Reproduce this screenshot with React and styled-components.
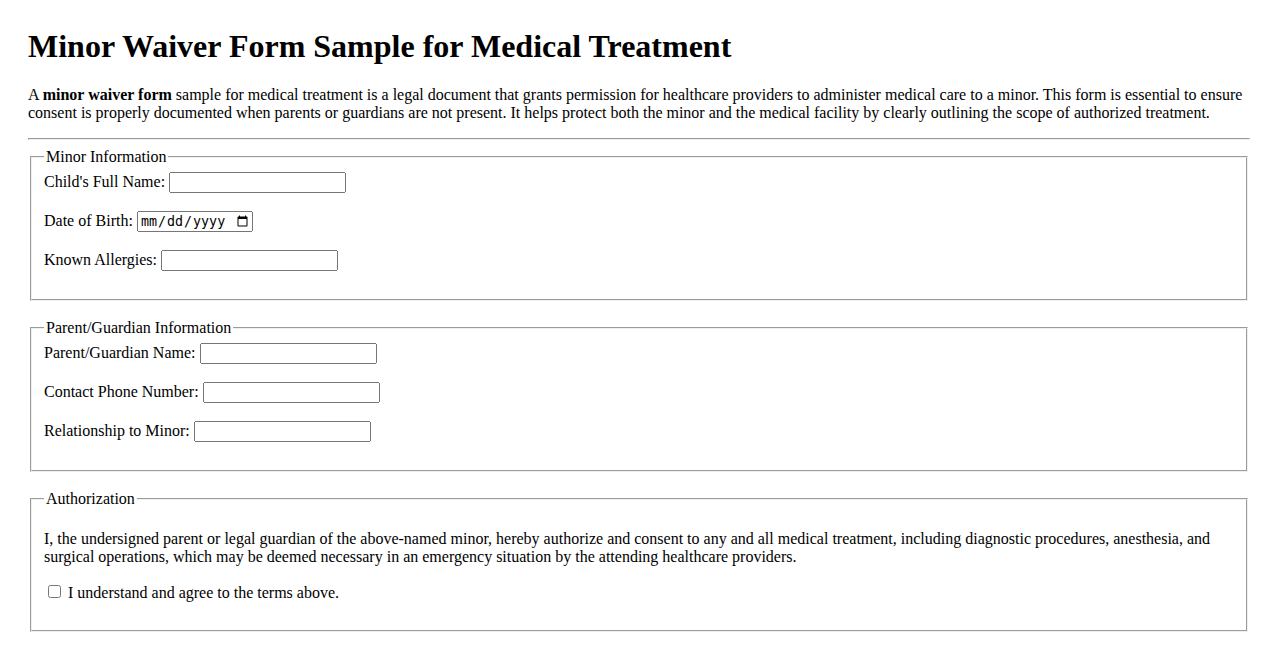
import React from "react";
import styled, { createGlobalStyle } from "styled-components";

const GlobalStyle = createGlobalStyle`
  body {
    margin: 8px;
    padding: 20px;
    font-family: "Liberation Serif", "Times New Roman", serif;
    font-size: 16px;
    color: #000;
    background: #fff;
  }
`;

const Title = styled.h1`
  font-size: 32px;
  font-weight: bold;
  margin: 0 0 21.44px;
`;

const Intro = styled.p`
  margin: 0 0 16px;
`;

const Rule = styled.hr`
  margin: 8px 0;
`;

const Section = styled.fieldset`
  margin: 0 2px 18px;
  padding: 0.35em 0.75em 0.625em;
`;

const Legend = styled.legend`
  padding: 0 2px;
`;

const FieldLabel = styled.label`
  font-family: inherit;
`;

const TextInput = styled.input`
  width: 177px;
  box-sizing: border-box;
`;

const DateInput = styled.input`
  width: 116px;
  box-sizing: border-box;
`;

const Statement = styled.p`
  margin: 16px 0;
`;

const fields = {
  minor: [
    { id: "childName", label: "Child's Full Name:", type: "text" },
    { id: "dob", label: "Date of Birth:", type: "date" },
    { id: "allergies", label: "Known Allergies:", type: "text" },
  ],
  guardian: [
    { id: "guardianName", label: "Parent/Guardian Name:", type: "text" },
    { id: "phone", label: "Contact Phone Number:", type: "tel" },
    { id: "relationship", label: "Relationship to Minor:", type: "text" },
  ],
};

const Field = ({ id, label, type }) => (
  <>
    <FieldLabel htmlFor={id}>{label}</FieldLabel>{" "}
    {type === "date" ? <DateInput type="date" id={id} /> : <TextInput type={type} id={id} />}
    <br />
    <br />
  </>
);

const App = () => {
  return (
    <>
      <GlobalStyle />
      <Title>Minor Waiver Form Sample for Medical Treatment</Title>
      <Intro>
        A <strong>minor waiver form</strong> sample for medical treatment is a legal document that
        grants permission for healthcare providers to administer medical care to a minor. This form
        is essential to ensure consent is properly documented when parents or guardians are not
        present. It helps protect both the minor and the medical facility by clearly outlining the
        scope of authorized treatment.
      </Intro>
      <Rule />
      <form>
        <Section>
          <Legend>Minor Information</Legend>
          {fields.minor.map((f) => (
            <Field key={f.id} {...f} />
          ))}
        </Section>
        <Section>
          <Legend>Parent/Guardian Information</Legend>
          {fields.guardian.map((f) => (
            <Field key={f.id} {...f} />
          ))}
        </Section>
        <Section>
          <Legend>Authorization</Legend>
          <Statement>
            I, the undersigned parent or legal guardian of the above-named minor, hereby authorize
            and consent to any and all medical treatment, including diagnostic procedures,
            anesthesia, and surgical operations, which may be deemed necessary in an emergency
            situation by the attending healthcare providers.
          </Statement>
          <input type="checkbox" id="agree" />{" "}
          <FieldLabel htmlFor="agree">I understand and agree to the terms above.</FieldLabel>
          <br />
          <br />
        </Section>
      </form>
    </>
  );
};

export default App;
